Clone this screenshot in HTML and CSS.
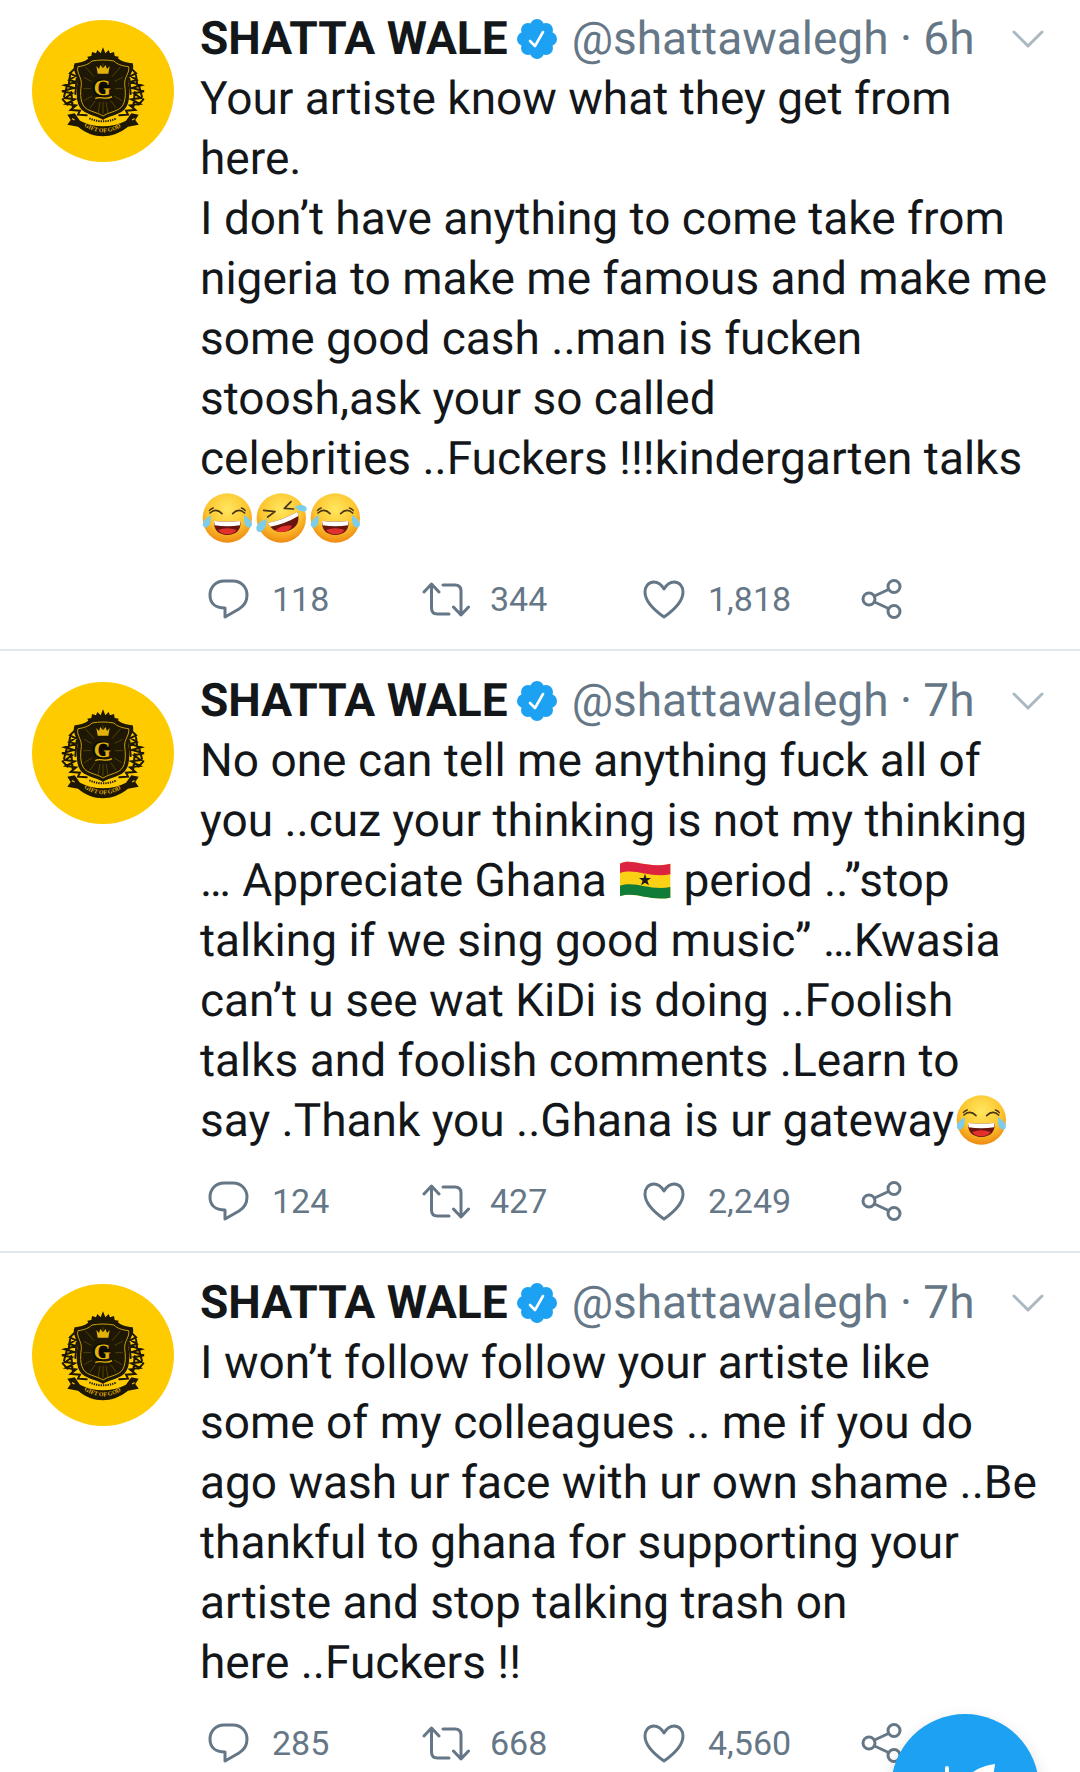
FILE: index.html
```html
<!DOCTYPE html>
<html lang="en">
<head>
  <meta charset="UTF-8">
  <meta name="viewport" content="width=device-width, initial-scale=1.0">
  <title>SHATTA WALE (@shattawalegh)</title>
  <link rel="stylesheet" href="styles.css">
</head>
<body>

  <!-- shared icons -->
  <svg class="sprite" aria-hidden="true">
    <path id="ribbon" d="M192 348q57 38 116 0" fill="none"/>

    <symbol id="avatar" viewBox="36 30 426 426">
      <rect x="36" y="30" width="426" height="426" fill="#fecb00"/>
      <g fill="#1d1704">
        <path d="M249 112l7 18 10-10 4 10 12-4 2 12 12 2-4 10h-86l-4-10 12-2 2-12 12 4 4-10 10 10z"/>
        <path d="M164 160c20-2 38-8 44-18 26-4 58-4 84 0 6 10 24 16 46 18 8 22-14 34-12 62 4 30 4 70-22 84-22 12-42 14-55 24-13-10-33-12-55-24-26-14-26-54-22-84 2-28-18-40-8-62z"/>
        <path d="M142 314l22-4 16 22c44 22 94 22 138 0l16-22 22 4-10 16 10 14-32 6c-48 38-104 38-150 0l-32-6 10-14z"/>
      </g>
      <!-- mantling on both sides -->
      <g fill="none" stroke="#1d1704" stroke-width="6" stroke-linecap="round">
        <path d="M164 176l-14 14 16 8-18 12 20 6-34 10 28 8-36 10 30 6-20 14 28 4-26 14 30 4-16 14 28 2-6 12 26 2M150 196l-4 30M140 230l-8 30M154 246l4 44M170 206l-4 46M128 268l14 16"/>
        <path d="M334 176l14 14-16 8 18 12-20 6 34 10-28 8 36 10-30 6 20 14-28 4 26 14-30 4 16 14-28 2 6 12-26 2M348 196l4 30M358 230l8 30M344 246l-4 44M328 206l4 46M370 268l-14 16"/>
      </g>
      <path d="M174 170c18-2 34-8 42-17 22-4 44-4 66 0 8 9 24 15 44 17 4 18-14 32-12 54 4 28 4 62-18 74-18 9-36 12-47 20-11-8-29-11-47-20-22-12-22-46-18-74 2-22-16-36-10-54z" fill="none" stroke="#c99f0a" stroke-width="3"/>
      <path d="M249 190V160M222 200l-26-30M276 200l26-30M214 214l-22-12M284 214l24-12M212 236h-22M286 236h22M216 258l-24 14M282 258l24 14M226 272l-16 22M272 272l16 22M240 276l-6 34M258 276l6 34M249 276v36" stroke="#6f5808" stroke-width="2"/>
      <path d="M229 168l8 9 4-12 8 10 8-10 4 12 8-9-4 23h-32z" fill="#e0b20b"/>
      <circle cx="244" cy="234" r="26" fill="#0b0903"/>
      <path d="M226 266c14-10 30 6 50-6" fill="none" stroke="#e0b20b" stroke-width="4"/>
      <path d="M208 325q41 18 82 0" fill="none" stroke="#1d1704" stroke-width="6" stroke-dasharray="4 3"/>
      <path d="M156 326l8 4M336 330l8-4" stroke="#e0b20b" stroke-width="4"/>
    </symbol>

    <symbol id="verified" viewBox="0 0 42 42">
      <g fill="#1da1f2">
        <circle cx="21" cy="21" r="16"/>
        <circle cx="21" cy="8" r="7"/><circle cx="30" cy="12" r="7"/>
        <circle cx="34" cy="21" r="7"/><circle cx="30" cy="30" r="7"/>
        <circle cx="21" cy="34" r="7"/><circle cx="12" cy="30" r="7"/>
        <circle cx="8" cy="21" r="7"/><circle cx="12" cy="12" r="7"/>
      </g>
      <path d="M14 23l5 5 8-14" fill="none" stroke="#fff" stroke-width="2.6" stroke-linecap="round" stroke-linejoin="round"/>
    </symbol>

    <symbol id="chevron" viewBox="0 0 36 24">
      <path d="M4 5l14 14L32 5" fill="none" stroke="#aab8c2" stroke-width="3" stroke-linecap="round"/>
    </symbol>

    <symbol id="reply" viewBox="0 0 48 44">
      <path d="M20 4h9c8 0 14 6 14 14 0 6-3 11-8 14L21 40v-9C11 31 6 26 6 18S12 4 20 4z"/>
    </symbol>

    <symbol id="retweet" viewBox="0 0 48 44">
      <path d="M2 15l7.500-8 7.500 8M9.500 8v23q0 6 6 6H27M21 8h12q6 0 6 6v23M31.500 30l7.500 8 7.500-8"/>
    </symbol>

    <symbol id="like" viewBox="0 0 48 44">
      <path d="M24 12c3-5 6-7 10-7 6 0 9 5 9 10 0 10-9 18-19 25C14 33 5 25 5 15 5 10 8 5 14 5c4 0 7 2 10 7z"/>
    </symbol>

    <symbol id="share" viewBox="0 0 48 44">
      <circle cx="11" cy="22" r="6"/><circle cx="36" cy="9.500" r="6"/><circle cx="36" cy="34.500" r="6"/>
      <path d="M16.500 19L30.500 12.500M16.500 25L30.500 31.500"/>
    </symbol>

    <radialGradient id="face" cx="50%" cy="32%" r="68%">
      <stop offset="0" stop-color="#ffe760"/>
      <stop offset=".6" stop-color="#fdc62f"/>
      <stop offset="1" stop-color="#ee8a12"/>
    </radialGradient>

    <symbol id="joy" viewBox="30 39 162 156">
      <circle cx="112" cy="117" r="74" fill="url(#face)"/>
      <path d="M60 102q18-16 36 2M128 104q18-18 36-2" fill="none" stroke="#493516" stroke-width="5" stroke-linecap="round"/>
      <path d="M58 95q4-6 12-8M154 87q8 2 12 8" fill="none" stroke="#493516" stroke-width="4" stroke-linecap="round"/>
      <path d="M72 126q40 5 80 0 2 40-40 42-42-2-40-42z" fill="#681510"/>
      <path d="M84 153q28-10 56 0-10 13-28 13t-28-13z" fill="#e2312c"/>
      <path d="M72 126q40 5 80 0l-2 13q-38 6-76 0z" fill="#fff"/>
      <path d="M62 108q-22 14-24 28 2 14 15 8 11-8 9-36zM162 108q22 14 24 28-2 14-15 8-11-8-9-36z" fill="#7bcdea"/>
    </symbol>

    <symbol id="rofl" viewBox="192 39 162 156">
      <circle cx="274" cy="117" r="74" fill="url(#face)"/>
      <path d="M221 94l34 4-22 16M303 68l-20 20 28 2" fill="none" stroke="#493516" stroke-width="5" stroke-linejoin="round" stroke-linecap="round"/>
      <path d="M233 132q48-10 89-34 14 42-28 58-42 12-61-24z" fill="#681510"/>
      <path d="M256 155q16-18 50-15-6 14-22 18-16 4-28-3z" fill="#e2312c"/>
      <path d="M233 132q48-10 89-34l3 13q-40 24-84 32z" fill="#fff"/>
      <path d="M231 120q-28 8-32 24-1 16 12 15 17-4 20-39zM314 84q16-10 31-3 10 8 2 15-14 6-33-12z" fill="#7bcdea"/>
    </symbol>

    <symbol id="ghana" viewBox="48 49 162 156">
      <path d="M54 78c36-18 78 16 151 0v102c-62 12-104-20-151-4z" fill="#fbd116"/>
      <path d="M54 78c36-18 78 16 151 0v32c-62 12-104-20-151-4z" fill="#dc2340"/>
      <path d="M54 144c47-16 89 16 151 4v32c-62 12-104-20-151-4z" fill="#107c38"/>
      <path d="M129 108l4 13h14l-11 8 5 14-12-8-12 8 5-14-11-8h14z" fill="#191919"/>
    </symbol>
  </svg>

  <main class="timeline">

    <article class="tweet">
      <a class="avatar" href="#" aria-label="SHATTA WALE">
        <svg viewBox="36 30 426 426">
          <use href="#avatar" x="36" y="30" width="426" height="426"/>
          <text x="247" y="254" class="crest-letter">G</text>
          <text class="crest-motto"><textPath href="#ribbon">GIFT OF GOD</textPath></text>
        </svg>
      </a>
      <div class="body">
        <header class="head">
          <a class="name" href="#">SHATTA WALE</a>
          <svg class="verified" role="img" aria-label="Verified"><use href="#verified"/></svg>
          <span class="meta">@shattawalegh · 6h</span>
          <button class="more" aria-label="More"><svg><use href="#chevron"/></svg></button>
        </header>
        <p class="text">Your artiste know what they get from here.<br>I don’t have anything to come take from nigeria to make me famous and make me some good cash ..man is fucken stoosh,ask your so called <span class="keep">celebrities ..Fuckers</span> !!!kindergarten talks <svg class="emoji" role="img" aria-label="😂"><use href="#joy"/></svg><svg class="emoji" role="img" aria-label="🤣"><use href="#rofl"/></svg><svg class="emoji" role="img" aria-label="😂"><use href="#joy"/></svg></p>
        <div class="actions">
          <button class="action" aria-label="Reply"><svg><use href="#reply"/></svg><span>118</span></button>
          <button class="action" aria-label="Retweet"><svg><use href="#retweet"/></svg><span>344</span></button>
          <button class="action" aria-label="Like"><svg><use href="#like"/></svg><span>1,818</span></button>
          <button class="action" aria-label="Share"><svg><use href="#share"/></svg></button>
        </div>
      </div>
    </article>

    <article class="tweet">
      <a class="avatar" href="#" aria-label="SHATTA WALE">
        <svg viewBox="36 30 426 426">
          <use href="#avatar" x="36" y="30" width="426" height="426"/>
          <text x="247" y="254" class="crest-letter">G</text>
          <text class="crest-motto"><textPath href="#ribbon">GIFT OF GOD</textPath></text>
        </svg>
      </a>
      <div class="body">
        <header class="head">
          <a class="name" href="#">SHATTA WALE</a>
          <svg class="verified" role="img" aria-label="Verified"><use href="#verified"/></svg>
          <span class="meta">@shattawalegh · 7h</span>
          <button class="more" aria-label="More"><svg><use href="#chevron"/></svg></button>
        </header>
        <p class="text">No one can tell me anything fuck all of <span class="keep">you ..cuz</span> your thinking is not my thinking … Appreciate Ghana <svg class="emoji" role="img" aria-label="🇬🇭"><use href="#ghana"/></svg> period ..”stop talking if we sing good music” …Kwasia can’t u see wat KiDi is doing ..Foolish talks and foolish comments .Learn to <span class="keep">say .Thank</span> you ..Ghana is ur gateway<svg class="emoji" role="img" aria-label="😂"><use href="#joy"/></svg></p>
        <div class="actions">
          <button class="action" aria-label="Reply"><svg><use href="#reply"/></svg><span>124</span></button>
          <button class="action" aria-label="Retweet"><svg><use href="#retweet"/></svg><span>427</span></button>
          <button class="action" aria-label="Like"><svg><use href="#like"/></svg><span>2,249</span></button>
          <button class="action" aria-label="Share"><svg><use href="#share"/></svg></button>
        </div>
      </div>
    </article>

    <article class="tweet">
      <a class="avatar" href="#" aria-label="SHATTA WALE">
        <svg viewBox="36 30 426 426">
          <use href="#avatar" x="36" y="30" width="426" height="426"/>
          <text x="247" y="254" class="crest-letter">G</text>
          <text class="crest-motto"><textPath href="#ribbon">GIFT OF GOD</textPath></text>
        </svg>
      </a>
      <div class="body">
        <header class="head">
          <a class="name" href="#">SHATTA WALE</a>
          <svg class="verified" role="img" aria-label="Verified"><use href="#verified"/></svg>
          <span class="meta">@shattawalegh · 7h</span>
          <button class="more" aria-label="More"><svg><use href="#chevron"/></svg></button>
        </header>
        <p class="text">I won’t follow follow your artiste like some of my colleagues .. me if you do ago wash ur face with ur own shame ..Be thankful to ghana for supporting your artiste and stop talking trash on <span class="keep">here ..Fuckers !!</span></p>
        <div class="actions">
          <button class="action" aria-label="Reply"><svg><use href="#reply"/></svg><span>285</span></button>
          <button class="action" aria-label="Retweet"><svg><use href="#retweet"/></svg><span>668</span></button>
          <button class="action" aria-label="Like"><svg><use href="#like"/></svg><span>4,560</span></button>
          <button class="action" aria-label="Share"><svg><use href="#share"/></svg></button>
        </div>
      </div>
    </article>

  </main>

  <button class="compose" aria-label="New Tweet">
    <svg viewBox="0 0 148 148">
      <path d="M56 54v26M43 67h26" stroke="#fff" stroke-width="4" stroke-linecap="round"/>
      <path d="M104 50c-24 3-42 20-44 50l4 4c2-10 6-16 10-20 16 2 28-12 30-34z" fill="#fff"/>
    </svg>
  </button>

</body>
</html>
```
FILE: styles.css
```css
* {
  box-sizing: border-box;
}
body {
  margin: 0;
  height: 100vh;
  overflow: hidden;
  background: #fff;
  color: #14171a;
  font-family: Roboto, "Liberation Sans", sans-serif;
  font-size: 46px;
  line-height: 60px;
  text-rendering: geometricPrecision;
}
a {
  color: inherit;
  text-decoration: none;
}
button {
  padding: 0;
  border: none;
  background: none;
  color: inherit;
  font: inherit;
  cursor: pointer;
}
svg {
  display: block;
}
.sprite {
  position: absolute;
  width: 0;
  height: 0;
}

/* tweets */
.tweet {
  display: flex;
  gap: 26px;
  padding: 20px 0 0 32px;
  border-bottom: 2px solid #e1e8ed;
}
.tweet:first-child {
  padding-top: 9px; /* scrolled a little under the top edge */
}
.avatar {
  flex: none;
  width: 142px;
  height: 142px;
  margin-top: 11px;
  border-radius: 50%;
  overflow: hidden;
}
.avatar svg {
  width: 100%;
  height: 100%;
}
.crest-letter {
  font: bold 66px "Liberation Serif", serif;
  text-anchor: middle;
  fill: #e0b20b;
}
.crest-motto {
  font: bold 18px "Liberation Serif", serif;
  fill: #e0b20b;
}
.body {
  flex: 1;
  min-width: 0;
}
.head {
  display: flex;
  align-items: center;
  padding-right: 34px;
  white-space: nowrap;
}
.name {
  font-weight: 700;
}
.verified {
  flex: none;
  width: 42px;
  height: 42px;
  margin: 0 14px 0 8px;
}
.meta {
  color: #657786;
}
.more {
  margin-left: auto;
}
.more svg {
  width: 36px;
  height: 24px;
}
.text {
  margin: 0;
  padding-right: 28px;
}
.keep {
  white-space: nowrap;
}
.emoji {
  display: inline-block;
  width: 54px;
  height: 52px;
  vertical-align: -10px;
}

/* reply, retweet, like, share */
.actions {
  display: grid;
  grid-template-columns: repeat(4, 1fr);
  height: 100px;
  padding: 0 4px;
  color: #657786;
  font-size: 34px;
}
.action {
  display: flex;
  align-items: center;
  gap: 20px;
}
.action svg {
  width: 48px;
  height: 44px;
  fill: none;
  stroke: currentColor;
  stroke-width: 3px;
  stroke-linecap: round;
  stroke-linejoin: round;
}

.compose {
  position: fixed;
  right: 41px;
  bottom: -90px;
  width: 148px;
  height: 148px;
  border-radius: 50%;
  background: #1da1f2;
  box-shadow: 0 6px 16px rgba(0, 0, 0, 0.15);
}
```
